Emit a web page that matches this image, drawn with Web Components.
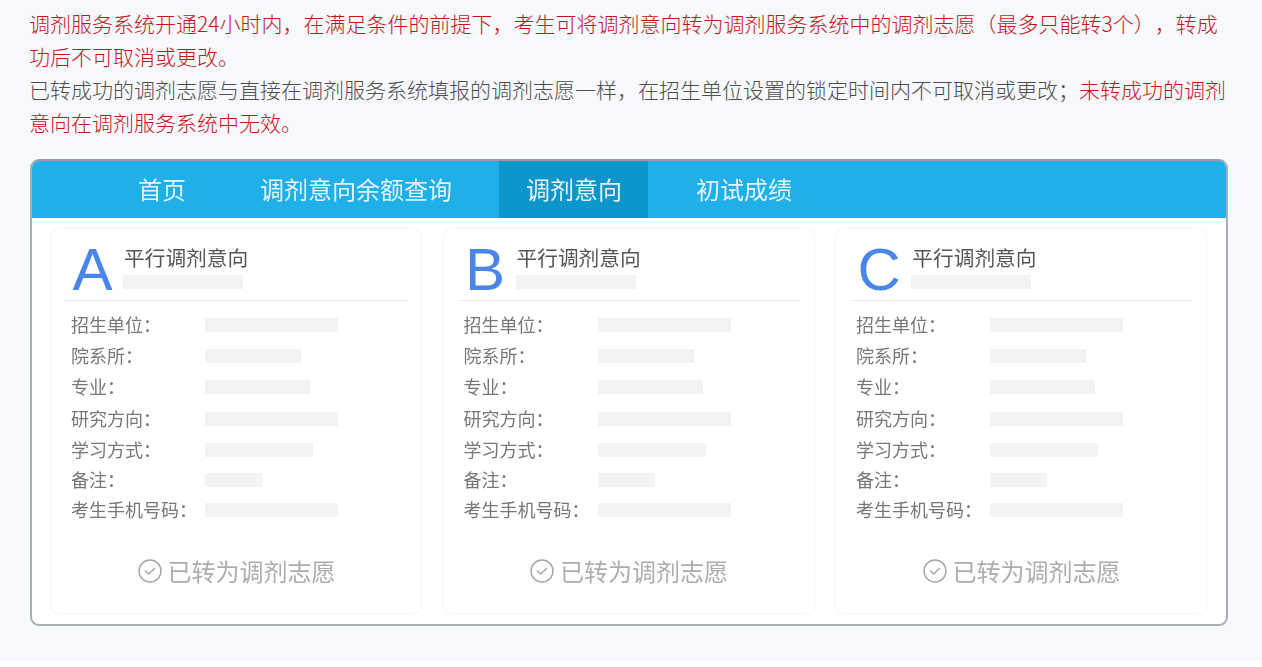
<!DOCTYPE html>
<html lang="zh-CN"><head><meta charset="utf-8"><title>调剂意向</title>
<style>
html,body{margin:0;padding:0;background:#fff}
body{font-family:"Noto Sans CJK SC","Liberation Sans",sans-serif}
notice-text p{margin:0}
notice-text b{font-weight:300;color:#c4141a}
</style></head><body>
<guide-page>
<notice-text>
<p><b>调剂服务系统开通24小时内，在满足条件的前提下，考生可将调剂意向转为调剂服务系统中的调剂志愿（最多只能转3个），转成功后不可取消或更改。</b></p>
<p>已转成功的调剂志愿与直接在调剂服务系统填报的调剂志愿一样，在招生单位设置的锁定时间内不可取消或更改；<b>未转成功的调剂意向在调剂服务系统中无效。</b></p>
</notice-text>
<app-frame>
<nav-bar slot="nav"></nav-bar>
<wish-card letter="A"></wish-card>
<wish-card letter="B"></wish-card>
<wish-card letter="C"></wish-card>
</app-frame>
</guide-page>
<script>
function def(name,css,html){
  customElements.define(name,class extends HTMLElement{
    constructor(){super();this.attachShadow({mode:'open'});}
    connectedCallback(){
      const h=typeof html==='function'?html(this):html;
      this.shadowRoot.innerHTML='<style>'+css+'</style>'+h;
    }
  });
}
def('guide-page',`:host{display:block;box-sizing:border-box;height:661px;background:#f7f9fc;padding:7px 0 0 29px;overflow:hidden}`,`<slot></slot>`);
def('notice-text',`:host{display:block;width:1203px;height:132px;margin-bottom:20px;font:300 21px/33px "Noto Sans CJK SC",sans-serif;color:#4d4d4d;text-spacing-trim:space-all}`,`<slot></slot>`);
def('app-frame',`:host{display:block;box-sizing:border-box;width:1198px;height:467px;margin-left:1px;border:2px solid #aaaeb4;border-top-color:#9a9ea4;border-radius:9px;background:#fff;overflow:hidden}
.cards{display:flex;gap:22.5px;padding:11px 20px 0 19px;filter:blur(.4px)}`,
`<slot name="nav"></slot><div class="cards"><slot></slot></div>`);
def('nav-bar',`:host{display:flex;height:57px;background:#1fafe9;padding-left:79px;gap:20px;color:#e6f5fc;font:400 24px/55px "Noto Sans CJK SC",sans-serif}
span{display:block;padding:0 27px}
span.on{background:#0b97cc;padding-right:26px;margin-right:1px}
i{font-style:normal;display:block;filter:blur(.5px)}`,
`<span><i>首页</i></span><span><i>调剂意向余额查询</i></span><span class="on"><i>调剂意向</i></span><span><i>初试成绩</i></span>`);
const rows=[['招生单位：',133,31],['院系所：',96,31],['专业：',105,32],['研究方向：',133,31],['学习方式：',108,30],['备注：',57,30],['考生手机号码：',133,30]];
def('wish-card',`:host{display:block;box-sizing:border-box;width:370px;height:384px;background:#fff;border-radius:9px;box-shadow:0 0 4px rgba(0,0,0,.08);padding:0 14px;flex:none}
.head{display:flex;gap:11.5px;height:71px;border-bottom:1px solid #ececec}
.letter{margin-left:7.5px;padding-top:11px;font:300 60px/60px "Liberation Sans",sans-serif;color:#4a86e8}
.tt{font:400 20.7px/30px "Noto Sans CJK SC",sans-serif;color:#555;padding-top:13px}
.ph{background:#f3f3f3;height:14px}
.ttp{width:120px;margin:3px 0 0 -1px}
.rows{padding-top:17px;height:214px;box-sizing:border-box}
.row{display:flex;align-items:flex-start}
.lb{width:140px;padding-left:6px;box-sizing:border-box;margin-top:-1px;font:400 18px/14px "Noto Sans CJK SC",sans-serif;color:#777;white-space:nowrap}
.foot{display:flex;align-items:center;justify-content:center;gap:6px;height:36px;padding-left:1px;font:400 24px/36px "Noto Sans CJK SC",sans-serif;color:#adadad;margin-top:38px}
svg{display:block}`,
el=>`<div class="head"><div class="letter">${el.getAttribute('letter')}</div><div><div class="tt">平行调剂意向</div><div class="ph ttp"></div></div></div>
<div class="rows">${rows.map(r=>`<div class="row" style="height:${r[2]}px"><div class="lb">${r[0]}</div><div class="ph" style="width:${r[1]}px"></div></div>`).join('')}</div>
<div class="foot"><svg width="24" height="24" viewBox="0 0 24 24" fill="none" stroke="#a3a3a3" stroke-width="1.4"><circle cx="12" cy="12" r="11"/><path d="M7.5 12l3.2 3L16.5 9.5" stroke-linecap="round" stroke-linejoin="round"/></svg><span>已转为调剂志愿</span></div>`);
</script>
</body></html>
